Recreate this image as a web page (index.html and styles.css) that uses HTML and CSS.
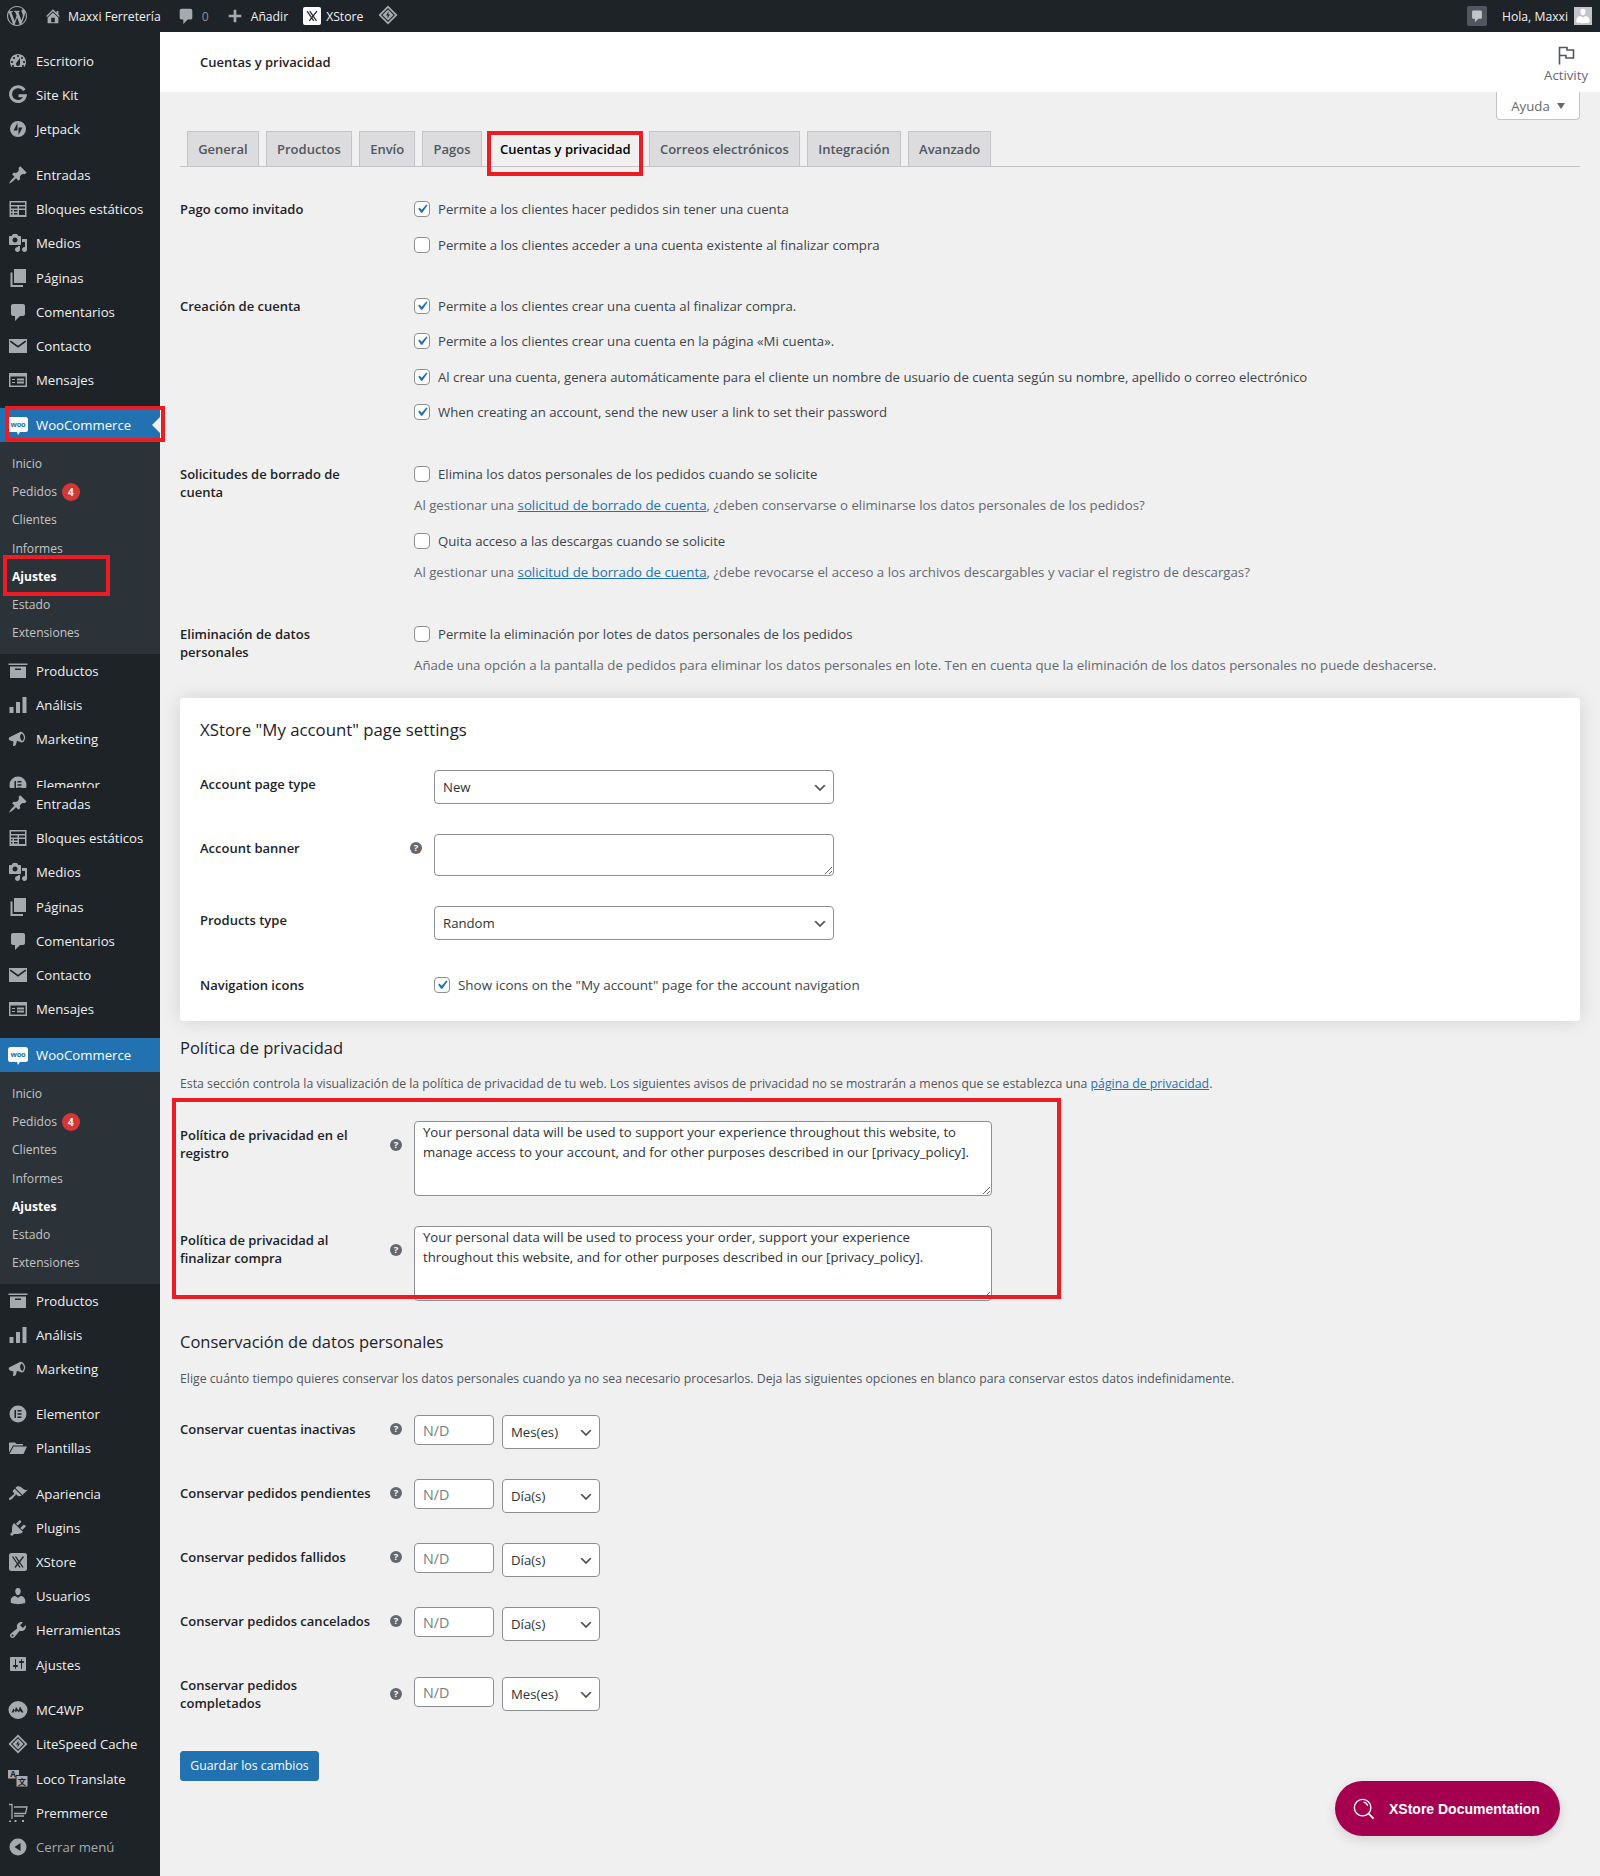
FILE: index.html
```html
<!DOCTYPE html>
<html lang="es">
<head>
<meta charset="utf-8">
<title>Cuentas y privacidad</title>
<link rel="stylesheet" href="styles.css">
</head>
<body>
<svg class="defs" width="0" height="0" aria-hidden="true">
<symbol id="i-wp" viewBox="0 0 20 20"><path d="M20 10c0-5.51-4.49-10-10-10C4.48 0 0 4.49 0 10c0 5.52 4.48 10 10 10 5.51 0 10-4.48 10-10zM7.78 15.37L4.37 6.22c.55-.02 1.17-.08 1.17-.08.5-.06.44-1.13-.06-1.11 0 0-1.45.11-2.37.11-.18 0-.37 0-.58-.01C4.12 2.69 6.87 1.11 10 1.11c2.33 0 4.45.87 6.05 2.34-.68-.11-1.65.39-1.65 1.58 0 .74.45 1.36.9 2.1.35.61.55 1.36.55 2.46 0 1.49-1.4 5-1.4 5l-3.03-8.37c.54-.02.82-.17.82-.17.5-.05.44-1.25-.06-1.22 0 0-1.44.12-2.38.12-.87 0-2.33-.12-2.33-.12-.5-.03-.56 1.2-.06 1.22l.92.08 1.26 3.41zM17.41 10c.24-.64.74-1.87.43-4.25.7 1.29 1.05 2.71 1.05 4.25 0 3.29-1.73 6.24-4.4 7.78.97-2.59 1.94-5.2 2.92-7.78zM6.1 18.09C3.12 16.65 1.11 13.53 1.11 10c0-1.3.23-2.48.72-3.59C3.25 10.3 4.67 14.2 6.1 18.09zm4.03-6.63l2.58 6.98c-.86.29-1.76.45-2.71.45-.79 0-1.57-.11-2.29-.33.81-2.38 1.62-4.74 2.42-7.1z"/></symbol>
<symbol id="i-home" viewBox="0 0 20 20"><path d="M16 8.5l1.53 1.53-1.06 1.06L10 4.62l-6.47 6.47-1.06-1.06L10 2.5l4 4v-2h2v4zm-6-2.46l6 5.99V18H4v-5.97zM12 17v-5H8v5h4z"/></symbol>
<symbol id="i-comment" viewBox="0 0 20 20"><path d="M5 2h10c1.1 0 2 .9 2 2v8c0 1.1-.9 2-2 2h-3l-5 5v-5H5c-1.1 0-2-.9-2-2V4c0-1.1.9-2 2-2z"/></symbol>
<symbol id="i-plus" viewBox="0 0 20 20"><path d="M17 8.500v3h-5.500V17h-3v-5.500H3v-3h5.500V3h3v5.500z"/></symbol>
<symbol id="i-dash" viewBox="0 0 20 20"><path fill-rule="evenodd" d="M3.76 16h12.48c1.1-1.37 1.76-3.11 1.76-5 0-4.42-3.58-8-8-8s-8 3.58-8 8c0 1.89.66 3.63 1.76 5zM10 4c.55 0 1 .45 1 1s-.45 1-1 1-1-.45-1-1 .45-1 1-1zM6 6c.55 0 1 .45 1 1s-.45 1-1 1-1-.45-1-1 .45-1 1-1zm8 0c.55 0 1 .45 1 1s-.45 1-1 1-1-.45-1-1 .45-1 1-1zm-5.37 5.55L12 7v6c0 1.1-.9 2-2 2s-2-.9-2-2c0-.57.24-1.08.63-1.45zM4 10c.55 0 1 .45 1 1s-.45 1-1 1-1-.45-1-1 .45-1 1-1zm12 0c.55 0 1 .45 1 1s-.45 1-1 1-1-.45-1-1 .45-1 1-1zM5 14c.55 0 1 .45 1 1s-.45 1-1 1-1-.45-1-1 .45-1 1-1zm10 0c.55 0 1 .45 1 1s-.45 1-1 1-1-.45-1-1 .45-1 1-1z"/></symbol>
<symbol id="i-g" viewBox="0 0 20 20"><path d="M16.300 5.300A7.400 7.400 0 1 0 17.200 10.800H10.500" fill="none" stroke="currentColor" stroke-width="3"/></symbol>
<symbol id="i-jet" viewBox="0 0 20 20"><path fill-rule="evenodd" d="M10 2a8 8 0 1 0 0 16 8 8 0 0 0 0-16zM9.500 4v7.500H5.500zM10.500 16V8.500H14.500z"/></symbol>
<symbol id="i-pin" viewBox="0 0 20 20"><path d="M10.440 3.020l1.820-1.820 6.360 6.350-1.830 1.820c-1.050-.68-2.480-.57-3.410.36l-.75.75c-.92.93-1.040 2.350-.35 3.410l-1.830 1.820-2.410-2.410-2.800 2.790c-.42.42-3.380 2.710-3.800 2.290s1.860-3.390 2.280-3.810l2.790-2.790L4.100 9.360l1.830-1.820c1.050.69 2.480.57 3.400-.36l.75-.75c.93-.92 1.050-2.350.36-3.410z"/></symbol>
<symbol id="i-blocks" viewBox="0 0 20 20"><path fill-rule="evenodd" d="M1.500 2h17v16h-17zM3 3.500v2.500h14V3.500zM3 7.500v2h6.500v-2zM11 7.500v2h6v-2zM3 11v1.500h1.500V11zM6 11v1.500h3.500V11zM11 11v5h6v-5zM3 14v1.500h1.500V14zM6 14v1.500h3.500V14z"/></symbol>
<symbol id="i-media" viewBox="0 0 20 20"><path d="M13 11V4c0-.55-.45-1-1-1h-1.670L9 1H5L3.670 3H2c-.55 0-1 .45-1 1v7c0 .55.45 1 1 1h10c.55 0 1-.45 1-1zM7 4.500c1.380 0 2.500 1.120 2.500 2.500S8.380 9.500 7 9.500 4.500 8.380 4.500 7 5.620 4.500 7 4.500zM14 6h5v10.500c0 1.380-1.120 2.500-2.500 2.500S14 17.880 14 16.500s1.120-2.500 2.500-2.500c.17 0 .34.02.5.05V9h-3V6zm-4 8.050V13h2v3.500c0 1.380-1.120 2.500-2.500 2.500S7 17.880 7 16.500 8.120 14 9.500 14c.17 0 .34.02.5.05z"/></symbol>
<symbol id="i-pages" viewBox="0 0 20 20"><path d="M6 1h12v14H6zM2.500 4.500h2V17H15v2H2.500z"/></symbol>
<symbol id="i-mail" viewBox="0 0 20 20"><path fill-rule="evenodd" d="M1 3h18v14H1zM2.800 4.500L1.700 5.800 10 11.800l8.300-6-1.100-1.300-7.200 5.200z"/></symbol>
<symbol id="i-forms" viewBox="0 0 20 20"><path fill-rule="evenodd" d="M1 3h18v14H1zM2.500 6.500v9h15v-9zM4 9h3v1H4zM9 8.500h7v2H9zM4 12h3v1H4zM9 11.500h7v2H9z"/></symbol>
<symbol id="i-box" viewBox="0 0 20 20"><path fill-rule="evenodd" d="M.5 2.500h19V4H.5zM2 5.500h16V17H2zM7 7.500v1.500h6V7.500z"/></symbol>
<symbol id="i-bars" viewBox="0 0 20 20"><path d="M1.500 12H5.500V18H1.500zM8 7H12V18H8zM14.500 2H18.500V18H14.500z"/></symbol>
<symbol id="i-mega" viewBox="0 0 20 20"><path fill-rule="evenodd" d="M1 8.500l11-5.500c1-.5 2.200 0 3 .8a7 7 0 0 1 1 8.500c-.8 1-2 1.500-3 1l-4-1.500-1 3.800c-.2.900-1 1.400-2 1.400H5L5.500 12.500 2 11.500C.8 11 .5 9 1 8.500zM13.500 4.500a4.700 4.700 0 0 0 1 7.500 4.700 4.700 0 0 0-1-7.500z"/></symbol>
<symbol id="i-elem" viewBox="0 0 20 20"><path fill-rule="evenodd" d="M10 1.500a8.500 8.500 0 1 0 0 17 8.500 8.500 0 0 0 0-17zM6.500 6h1.500v8H6.500zM9.500 6h4v1.500h-4zM9.500 9.250h4v1.500h-4zM9.500 12.500h4V14h-4z"/></symbol>
<symbol id="i-folder" viewBox="0 0 20 20"><path d="M1 4.500h6l1.500 1.500H15v1.500H5L1 14.500zM5.500 8.500H19l-3.500 7.500H1.500z"/></symbol>
<symbol id="i-brush" viewBox="0 0 20 20"><path d="M14.480 11.060L7.410 3.990l1.500-1.500c.5-.56 2.300-.47 3.510.32 1.210.8 1.430 1.280 2.910 2.100 1.180.64 2.450 1.260 4.450.85zm-.71.71L6.700 4.700 4.930 6.470c-.39.39-.39 1.020 0 1.410l1.060 1.060c.39.39.39 1.030 0 1.420-.6.6-1.430 1.110-2.210 1.690-.35.26-.7.53-1.010.84C1.430 13.230.4 14.870 1.200 15.670c.79.8 2.440-.23 3.770-1.560.31-.31.58-.66.84-1.010.58-.78 1.090-1.610 1.690-2.210.39-.39 1.020-.39 1.410 0l1.060 1.060c.39.39 1.020.39 1.410 0z"/></symbol>
<symbol id="i-plug" viewBox="0 0 20 20"><path d="M13.110 4.360L9.870 7.600 8 5.730l3.240-3.240c.35-.34 1.050-.2 1.560.32.52.51.66 1.210.31 1.550zm-8 1.770l.91-1.120 9.010 9.010-1.190.84c-.71.71-2.630 1.160-3.820 1.160H6.140L4.900 17.260c-.59.59-1.540.59-2.120 0-.59-.58-.59-1.530 0-2.120l1.240-1.240v-3.880c0-1.130.4-3.190 1.090-3.890zm7.260 3.970l3.240-3.240c.34-.35 1.040-.21 1.550.31.52.51.66 1.210.31 1.550l-3.240 3.250z"/></symbol>
<symbol id="i-x" viewBox="0 0 20 20"><rect x="1" y="1" width="18" height="18" rx="2.500" fill="currentColor"/><path d="M4.500 4.500l7.500 11M15.500 4.500L7 15.500M7.500 4.500l7.500 11" fill="none" stroke="#1d2327" stroke-width="1.300"/></symbol>
<symbol id="i-user" viewBox="0 0 20 20"><path d="M10 9.250c-2.270 0-2.730-3.440-2.730-3.440C7 4.020 7.820 2 9.970 2c2.160 0 2.980 2.020 2.710 3.810 0 0-.41 3.440-2.680 3.440zm0 2.570L12.720 10c2.390 0 4.520 2.330 4.520 4.530v2.490s-3.650 1.130-7.240 1.130c-3.650 0-7.240-1.130-7.240-1.130v-2.490c0-2.250 1.940-4.480 4.470-4.480z"/></symbol>
<symbol id="i-tool" viewBox="0 0 20 20"><path d="M16.680 9.770c-1.340 1.340-3.300 1.670-4.950.99l-5.410 6.520c-.99.99-2.590.99-3.580 0s-.99-2.590 0-3.570l6.520-5.420c-.68-1.650-.35-3.610.99-4.950 1.280-1.280 3.120-1.620 4.720-1.060l-2.890 2.890 2.820 2.820 2.860-2.870c.53 1.580.18 3.390-1.080 4.670zM3.810 16.210c.4.39 1.040.39 1.430 0 .4-.4.4-1.040 0-1.430-.39-.4-1.030-.4-1.430 0-.39.39-.39 1.030 0 1.430z"/></symbol>
<symbol id="i-set" viewBox="0 0 20 20"><path fill-rule="evenodd" d="M18 16V4c0-.55-.45-1-1-1H3c-.55 0-1 .45-1 1v12c0 .55.45 1 1 1h14c.55 0 1-.45 1-1zM8 11h1c.55 0 1 .45 1 1s-.45 1-1 1H8v1.500c0 .28-.22.5-.5.5s-.5-.22-.5-.5V13H6c-.55 0-1-.45-1-1s.45-1 1-1h1V5.500c0-.28.22-.5.5-.5s.5.22.5.5V11zm5-2h-1c-.55 0-1-.45-1-1s.45-1 1-1h1V5.500c0-.28.22-.5.5-.5s.5.22.5.5V7h1c.55 0 1 .45 1 1s-.45 1-1 1h-1v5.500c0 .28-.22.5-.5.5s-.5-.22-.5-.5V9z"/></symbol>
<symbol id="i-mc" viewBox="0 0 20 20"><path fill-rule="evenodd" d="M10 1a9.500 9 0 1 0 0 18 9.500 9 0 0 0 0-18zM3.500 12.500l2-4 1.500 2 1-3.500 2.500 3.500 1.500-4 3.500 6h-2l-1.500-2-1 2-2-2-1 2-1.500-2-1 2z"/></symbol>
<symbol id="i-ls" viewBox="0 0 20 20"><path fill-rule="evenodd" d="M10 .5L19.500 10 10 19.500.5 10zM10 3L3 10l7 7 7-7zM10 4.500L15.500 10 10 15.500 4.500 10zM10.500 6.500L8 10.500h1.700L9.500 13.500l2.500-4h-1.700z"/></symbol>
<symbol id="i-close" viewBox="0 0 20 20"><path fill-rule="evenodd" d="M10 1.500a8.500 8.500 0 1 0 0 17 8.500 8.500 0 0 0 0-17zM12.500 6v8L6.500 10z"/></symbol>
<symbol id="i-cart" viewBox="0 0 20 20"><path d="M1 1.500h3v14.500M6 4h13l-1.500 6.500H6M6 13h10" fill="none" stroke="currentColor" stroke-width="1.300"/><path d="M1 17.500h2v1.500H1zM6.500 17h2v2h-2zM14 17h2v2h-2z"/></symbol>
<symbol id="i-woo" viewBox="0 0 20 20"><path d="M2.500 2h15A2.500 2.500 0 0 1 20 4.500v10a2.500 2.500 0 0 1-2.500 2.500H12l-2 3-1-3H2.500A2.500 2.500 0 0 1 0 14.500v-10A2.500 2.500 0 0 1 2.500 2z" fill="#fff"/></symbol>
<symbol id="i-help" viewBox="0 0 12 12"><circle cx="6" cy="6" r="6" fill="#646970"/></symbol>
<symbol id="i-flag" viewBox="0 0 20 20"><path d="M3.500 19.500V2.500H11V5H17.500V13H10V10.500H3.500" fill="none" stroke="currentColor" stroke-width="1.600"/></symbol>
</svg>

<header class="adminbar">
  <div class="ab-left">
    <svg class="ab-ic ab-wp"><use href="#i-wp"/></svg>
    <svg class="ab-ic ab-home"><use href="#i-home"/></svg>
    <span class="ab-t">Maxxi Ferretería</span>
    <svg class="ab-ic ab-com"><use href="#i-comment"/></svg>
    <span class="ab-t ab-zero">0</span>
    <svg class="ab-ic ab-plus"><use href="#i-plus"/></svg>
    <span class="ab-t">Añadir</span>
    <span class="ab-x"><svg><use href="#i-x"/></svg></span>
    <span class="ab-t">XStore</span>
    <svg class="ab-ic ab-ls"><use href="#i-ls"/></svg>
  </div>
  <div class="ab-right">
    <span class="ab-note"><svg><use href="#i-comment"/></svg></span>
    <span class="ab-t">Hola, Maxxi</span>
    <span class="ab-avatar"><svg><use href="#i-user"/></svg></span>
  </div>
</header>

<div class="layout">
  <nav class="sidebar">
    <div class="menu-clip">
      <ul class="menu">
        <li class="mi"><svg><use href="#i-dash"/></svg>Escritorio</li>
        <li class="mi"><svg><use href="#i-g"/></svg>Site Kit</li>
        <li class="mi"><svg><use href="#i-jet"/></svg>Jetpack</li>
        <li class="mi sep"><svg><use href="#i-pin"/></svg>Entradas</li>
        <li class="mi"><svg><use href="#i-blocks"/></svg>Bloques estáticos</li>
        <li class="mi"><svg><use href="#i-media"/></svg>Medios</li>
        <li class="mi"><svg><use href="#i-pages"/></svg>Páginas</li>
        <li class="mi"><svg><use href="#i-comment"/></svg>Comentarios</li>
        <li class="mi"><svg><use href="#i-mail"/></svg>Contacto</li>
        <li class="mi"><svg><use href="#i-forms"/></svg>Mensajes</li>
        <li class="mi sep current"><svg viewBox="0 0 20 20"><use href="#i-woo"/><text x="10" y="11.500" class="woo-t">woo</text></svg>WooCommerce</li>
        <li class="submenu">
          <ul>
            <li>Inicio</li>
            <li>Pedidos <span class="badge">4</span></li>
            <li>Clientes</li>
            <li>Informes</li>
            <li class="on">Ajustes</li>
            <li>Estado</li>
            <li>Extensiones</li>
          </ul>
        </li>
        <li class="mi"><svg><use href="#i-box"/></svg>Productos</li>
        <li class="mi"><svg><use href="#i-bars"/></svg>Análisis</li>
        <li class="mi"><svg><use href="#i-mega"/></svg>Marketing</li>
        <li class="mi sep"><svg><use href="#i-elem"/></svg>Elementor</li>
      </ul>
    </div>
    <ul class="menu menu-second">
      <li class="mi"><svg><use href="#i-pin"/></svg>Entradas</li>
      <li class="mi"><svg><use href="#i-blocks"/></svg>Bloques estáticos</li>
      <li class="mi"><svg><use href="#i-media"/></svg>Medios</li>
      <li class="mi"><svg><use href="#i-pages"/></svg>Páginas</li>
      <li class="mi"><svg><use href="#i-comment"/></svg>Comentarios</li>
      <li class="mi"><svg><use href="#i-mail"/></svg>Contacto</li>
      <li class="mi"><svg><use href="#i-forms"/></svg>Mensajes</li>
      <li class="mi sep current plain"><svg viewBox="0 0 20 20"><use href="#i-woo"/><text x="10" y="11.500" class="woo-t">woo</text></svg>WooCommerce</li>
      <li class="submenu">
        <ul>
          <li>Inicio</li>
          <li>Pedidos <span class="badge">4</span></li>
          <li>Clientes</li>
          <li>Informes</li>
          <li class="on">Ajustes</li>
          <li>Estado</li>
          <li>Extensiones</li>
        </ul>
      </li>
      <li class="mi"><svg><use href="#i-box"/></svg>Productos</li>
      <li class="mi"><svg><use href="#i-bars"/></svg>Análisis</li>
      <li class="mi"><svg><use href="#i-mega"/></svg>Marketing</li>
      <li class="mi sep sep-tight"><svg><use href="#i-elem"/></svg>Elementor</li>
      <li class="mi"><svg><use href="#i-folder"/></svg>Plantillas</li>
      <li class="mi sep"><svg><use href="#i-brush"/></svg>Apariencia</li>
      <li class="mi"><svg><use href="#i-plug"/></svg>Plugins</li>
      <li class="mi"><svg><use href="#i-x"/></svg>XStore</li>
      <li class="mi"><svg><use href="#i-user"/></svg>Usuarios</li>
      <li class="mi"><svg><use href="#i-tool"/></svg>Herramientas</li>
      <li class="mi"><svg><use href="#i-set"/></svg>Ajustes</li>
      <li class="mi sep"><svg><use href="#i-mc"/></svg>MC4WP</li>
      <li class="mi"><svg><use href="#i-ls"/></svg>LiteSpeed Cache</li>
      <li class="mi"><svg viewBox="0 0 20 20"><path d="M0 2h11v8.500H0z"/><path d="M8 7.500h12V19H8z" stroke="#1d2327" stroke-width="1"/><text x="5" y="8.500" class="loco-a">A</text><text x="14" y="16.500" class="loco-z">文</text></svg>Loco Translate</li>
      <li class="mi"><svg><use href="#i-cart"/></svg>Premmerce</li>
      <li class="mi collapse"><svg><use href="#i-close"/></svg>Cerrar menú</li>
    </ul>
  </nav>

  <main class="main">
    <div class="pagehead">
      <h1>Cuentas y privacidad</h1>
      <div class="activity"><svg><use href="#i-flag"/></svg><span>Activity</span></div>
    </div>
    <div class="help-tab">Ayuda <i class="caret"></i></div>

    <div class="content">
      <div class="tabs">
        <a class="tab">General</a>
        <a class="tab">Productos</a>
        <a class="tab">Envío</a>
        <a class="tab">Pagos</a>
        <a class="tab active">Cuentas y privacidad</a>
        <a class="tab">Correos electrónicos</a>
        <a class="tab">Integración</a>
        <a class="tab">Avanzado</a>
      </div>

      <section class="general">
        <div class="row row-first">
          <div class="lbl">Pago como invitado</div>
          <div class="ctl">
            <label class="opt"><input type="checkbox" checked>Permite a los clientes hacer pedidos sin tener una cuenta</label>
            <label class="opt"><input type="checkbox">Permite a los clientes acceder a una cuenta existente al finalizar compra</label>
          </div>
        </div>
        <div class="row">
          <div class="lbl">Creación de cuenta</div>
          <div class="ctl">
            <label class="opt"><input type="checkbox" checked>Permite a los clientes crear una cuenta al finalizar compra.</label>
            <label class="opt"><input type="checkbox" checked>Permite a los clientes crear una cuenta en la página «Mi cuenta».</label>
            <label class="opt"><input type="checkbox" checked>Al crear una cuenta, genera automáticamente para el cliente un nombre de usuario de cuenta según su nombre, apellido o correo electrónico</label>
            <label class="opt"><input type="checkbox" checked>When creating an account, send the new user a link to set their password</label>
          </div>
        </div>
        <div class="row">
          <div class="lbl">Solicitudes de borrado de<br>cuenta</div>
          <div class="ctl">
            <label class="opt with-note"><input type="checkbox">Elimina los datos personales de los pedidos cuando se solicite</label>
            <p class="note spaced">Al gestionar una <a href="#">solicitud de borrado de cuenta</a>, ¿deben conservarse o eliminarse los datos personales de los pedidos?</p>
            <label class="opt with-note"><input type="checkbox">Quita acceso a las descargas cuando se solicite</label>
            <p class="note">Al gestionar una <a href="#">solicitud de borrado de cuenta</a>, ¿debe revocarse el acceso a los archivos descargables y vaciar el registro de descargas?</p>
          </div>
        </div>
        <div class="row last">
          <div class="lbl">Eliminación de datos<br>personales</div>
          <div class="ctl">
            <label class="opt with-note"><input type="checkbox">Permite la eliminación por lotes de datos personales de los pedidos</label>
            <p class="note">Añade una opción a la pantalla de pedidos para eliminar los datos personales en lote. Ten en cuenta que la eliminación de los datos personales no puede deshacerse.</p>
          </div>
        </div>
      </section>

      <section class="card">
        <h2 class="card-title">XStore "My account" page settings</h2>
        <div class="row r-card">
          <div class="lbl lbl-input">Account page type</div>
          <div class="ctl"><select class="sel-wide"><option>New</option></select></div>
        </div>
        <div class="row r-card">
          <div class="lbl lbl-input">Account banner</div>
          <svg class="tip tip-8" viewBox="0 0 12 12"><use href="#i-help"/><text x="6" y="9.300" class="help-t">?</text></svg>
          <div class="ctl"><textarea class="ta-banner"></textarea></div>
        </div>
        <div class="row r-card r-gap">
          <div class="lbl lbl-input">Products type</div>
          <div class="ctl"><select class="sel-wide"><option>Random</option></select></div>
        </div>
        <div class="row r-card r-end">
          <div class="lbl">Navigation icons</div>
          <div class="ctl"><label class="opt"><input type="checkbox" checked>Show icons on the "My account" page for the account navigation</label></div>
        </div>
      </section>

      <section class="privacy">
        <h2 class="sec-title">Política de privacidad</h2>
        <p class="sec-desc">Esta sección controla la visualización de la política de privacidad de tu web. Los siguientes avisos de privacidad no se mostrarán a menos que se establezca una <a href="#">página de privacidad</a>.</p>
        <div class="row r-ta">
          <div class="lbl lbl-ta">Política de privacidad en el<br>registro</div>
          <svg class="tip tip-18" viewBox="0 0 12 12"><use href="#i-help"/><text x="6" y="9.300" class="help-t">?</text></svg>
          <div class="ctl"><textarea class="ta-policy">Your personal data will be used to support your experience throughout this website, to manage access to your account, and for other purposes described in our [privacy_policy].</textarea></div>
        </div>
        <div class="row r-ta">
          <div class="lbl lbl-ta">Política de privacidad al<br>finalizar compra</div>
          <svg class="tip tip-18" viewBox="0 0 12 12"><use href="#i-help"/><text x="6" y="9.300" class="help-t">?</text></svg>
          <div class="ctl"><textarea class="ta-policy">Your personal data will be used to process your order, support your experience throughout this website, and for other purposes described in our [privacy_policy].</textarea></div>
        </div>
      </section>

      <section class="retention">
        <h2 class="sec-title ret-title">Conservación de datos personales</h2>
        <p class="sec-desc ret-desc">Elige cuánto tiempo quieres conservar los datos personales cuando ya no sea necesario procesarlos. Deja las siguientes opciones en blanco para conservar estos datos indefinidamente.</p>
        <div class="row r-ret">
          <div class="lbl lbl-input">Conservar cuentas inactivas</div>
          <svg class="tip tip-8" viewBox="0 0 12 12"><use href="#i-help"/><text x="6" y="9.300" class="help-t">?</text></svg>
          <div class="ctl ret-ctl"><input class="num" type="text" placeholder="N/D"><select class="unit"><option>Mes(es)</option></select></div>
        </div>
        <div class="row r-ret">
          <div class="lbl lbl-input">Conservar pedidos pendientes</div>
          <svg class="tip tip-8" viewBox="0 0 12 12"><use href="#i-help"/><text x="6" y="9.300" class="help-t">?</text></svg>
          <div class="ctl ret-ctl"><input class="num" type="text" placeholder="N/D"><select class="unit"><option>Día(s)</option></select></div>
        </div>
        <div class="row r-ret">
          <div class="lbl lbl-input">Conservar pedidos fallidos</div>
          <svg class="tip tip-8" viewBox="0 0 12 12"><use href="#i-help"/><text x="6" y="9.300" class="help-t">?</text></svg>
          <div class="ctl ret-ctl"><input class="num" type="text" placeholder="N/D"><select class="unit"><option>Día(s)</option></select></div>
        </div>
        <div class="row r-ret">
          <div class="lbl lbl-input">Conservar pedidos cancelados</div>
          <svg class="tip tip-8" viewBox="0 0 12 12"><use href="#i-help"/><text x="6" y="9.300" class="help-t">?</text></svg>
          <div class="ctl ret-ctl"><input class="num" type="text" placeholder="N/D"><select class="unit"><option>Día(s)</option></select></div>
        </div>
        <div class="row r-ret r-ret-last">
          <div class="lbl lbl-double">Conservar pedidos<br>completados</div>
          <svg class="tip tip-11" viewBox="0 0 12 12"><use href="#i-help"/><text x="6" y="9.300" class="help-t">?</text></svg>
          <div class="ctl ret-ctl"><input class="num" type="text" placeholder="N/D"><select class="unit"><option>Mes(es)</option></select></div>
        </div>
      </section>

      <button class="save" type="button">Guardar los cambios</button>
    </div>
  </main>
</div>

<a class="doc-btn">
  <svg viewBox="0 0 24 24"><circle cx="10.500" cy="10.500" r="9" fill="none" stroke="#fff" stroke-width="1.500"/><path d="M17 17l5.500 5.500" stroke="#fff" stroke-width="1.800"/><path d="M11.500 4.500a5.500 5.500 0 0 1 4.500 4" fill="none" stroke="#fff" stroke-width="1.300"/></svg>
  <span>XStore Documentation</span>
</a>

<div class="mark mark-tab"></div>
<div class="mark mark-woo"></div>
<div class="mark mark-set"></div>
<div class="mark mark-policy"></div>
</body>
</html>
```
FILE: styles.css
```css
* { box-sizing: border-box; }
html, body { margin: 0; padding: 0; }
body {
  width: 1600px;
  height: 1876px;
  position: relative;
  overflow: hidden;
  background: #f0f0f1;
  color: #3c434a;
  font-family: "Open Sans", "Noto Sans", sans-serif;
  font-size: 13.200px;
  line-height: 20px;
}
.defs { position: absolute; }
ul { list-style: none; margin: 0; padding: 0; }
h1, h2, p { margin: 0; }
a { color: #2271b1; }
.loco-a { font: 700 8px "Open Sans", sans-serif; fill: #1d2327; text-anchor: middle; }
.loco-z { font: 700 8px "Noto Sans CJK SC", sans-serif; fill: #1d2327; text-anchor: middle; }
.woo-t { font: 700 7.500px "Open Sans", sans-serif; fill: #2271b1; text-anchor: middle; letter-spacing: -0.2px; }
.help-t { font: 700 9.500px "Open Sans", sans-serif; fill: #fff; text-anchor: middle; }

/* admin bar */
.adminbar {
  height: 32px;
  background: #1d2327;
  color: #f0f0f1;
  display: flex;
  justify-content: space-between;
  align-items: center;
  padding: 0 8px 0 7px;
}
.ab-left, .ab-right { display: flex; align-items: center; }
.ab-ic { width: 18px; height: 18px; fill: #a7aaad; flex: none; }
.ab-wp { width: 20px; height: 20px; margin-right: 17px; }
.ab-home { margin-right: 6px; }
.ab-com { margin-left: 16px; margin-right: 7px; }
.ab-zero { color: #8c8f94; }
.ab-plus { margin-left: 17px; margin-right: 7px; }
.ab-x { width: 18px; height: 18px; margin-left: 15px; margin-right: 5px; background: #fff; border-radius: 2px; }
.ab-x svg { width: 18px; height: 18px; color: #fff; display: block; }
.ab-ls { width: 20px; height: 20px; margin-left: 15px; margin-top: -2px; }
.ab-t { font-size: 12.200px; white-space: nowrap; margin-top: 1px; }
.ab-note { width: 20px; height: 20px; margin-right: 15px; background: #50575e; border-radius: 2px; display: flex; align-items: center; justify-content: center; fill: #c3c4c7; }
.ab-note svg { width: 14px; height: 14px; }
.ab-avatar { width: 18px; height: 18px; margin-left: 6px; background: #c3c4c7; display: block; fill: #fff; }
.ab-avatar svg { width: 18px; height: 18px; display: block; }

/* layout */
.layout { display: flex; height: 1844px; }
.sidebar {
  width: 160px;
  flex: none;
  background: #1d2327;
  color: #f0f0f1;
  padding-top: 12px;
}
.menu-clip { height: 744px; overflow: hidden; }
.menu-second { margin-top: -1px; }
.mi {
  height: 34.200px;
  display: flex;
  align-items: center;
  position: relative;
  padding-left: 36px;
  white-space: nowrap;
}
.mi svg {
  position: absolute;
  left: 8px;
  top: 7px;
  width: 20px;
  height: 20px;
  fill: #a7aaad;
  color: #a7aaad;
}
.sep { margin-top: 11.400px; }
.sep-tight { margin-top: 10.400px; }
.current { background: #2271b1; color: #fff; height: 34px; margin-top: 10.600px; }
.current::after {
  content: "";
  position: absolute;
  right: 0;
  top: 9px;
  border: 8px solid transparent;
  border-right-color: #f0f0f1;
  border-left-width: 0;
}
.current.plain { margin-top: 11.600px; }
.current.plain::after { display: none; }
.collapse { color: #a7aaad; }
.submenu { background: #2c3338; color: #c3c4c7; padding: 8px 0 6.600px; }
.submenu li { height: 28.200px; display: flex; align-items: center; padding-left: 12px; font-size: 12.100px; }
.submenu .on { color: #fff; font-weight: 700; }
.badge {
  width: 18px;
  height: 18px;
  margin-left: 5px;
  border-radius: 50%;
  background: #d63638;
  color: #fff;
  font-size: 10px;
  font-weight: 700;
  display: flex;
  align-items: center;
  justify-content: center;
}

/* main */
.main { flex: 1; position: relative; min-width: 0; }
.pagehead {
  height: 60px;
  background: #fff;
  padding: 0 12px 0 40px;
  display: flex;
  align-items: center;
  justify-content: space-between;
}
.pagehead h1 { font-size: 13px; font-weight: 600; color: #1d2327; line-height: 20px; }
.activity { display: flex; flex-direction: column; align-items: center; color: #646970; margin-top: 4px; }
.activity svg { width: 20px; height: 20px; color: #50575e; fill: none; margin-bottom: 2px; }
.activity span { line-height: 16px; }
.help-tab {
  position: absolute;
  right: 20px;
  top: 60px;
  width: 84px;
  height: 28px;
  background: #fff;
  border: 1px solid #c3c4c7;
  border-top: 0;
  border-radius: 0 0 4px 4px;
  display: flex;
  align-items: center;
  justify-content: center;
  gap: 7px;
  color: #646970;
}
.caret { border: 4.500px solid transparent; border-top: 6px solid #646970; border-bottom: 0; margin-top: 1px; }
.content { padding: 39px 20px 0; }

.tabs { display: flex; gap: 7px; padding-left: 7px; border-bottom: 1px solid #c3c4c7; height: 36px; margin-bottom: 32px; }
.tab {
  height: 35px;
  padding: 0 10.200px;
  background: #dcdcde;
  border: 1px solid #c3c4c7;
  border-bottom: 0;
  color: #50575e;
  font-size: 13px;
  font-weight: 600;
  display: flex;
  align-items: center;
  white-space: nowrap;
}
.tab.active { background: #f0f0f1; color: #000; }

.row { display: grid; grid-template-columns: 210px 24px 1fr; margin-bottom: 42px; }
.row.row-first { margin-bottom: 41px; }
.row.last { margin-bottom: 23px; }
.lbl { grid-column: 1; color: #1d2327; font-size: 13px; font-weight: 600; line-height: 18px; padding-top: 1px; }
.lbl-input { padding-top: 5px; }
.lbl-ta { padding-top: 5px; }
.ctl { grid-column: 3; grid-row: 1; min-width: 0; }
.opt { display: flex; align-items: center; height: 20px; margin-bottom: 15.500px; white-space: nowrap; }
.opt:last-child { margin-bottom: 0; }
.opt.with-note { margin-bottom: 11px; }
.note { color: #646970; font-size: 13.250px; white-space: nowrap; }
.note.spaced { margin-bottom: 16px; }
.r-end .opt { font-size: 13.450px; }

input[type="checkbox"] {
  appearance: none;
  width: 16px;
  height: 16px;
  margin: 0 8px 0 0;
  flex: none;
  background: #fff center / 18px 18px no-repeat;
  border: 1px solid #8c8f94;
  border-radius: 4px;
}
input[type="checkbox"]:checked {
  background-image: url("data:image/svg+xml,%3Csvg xmlns='http://www.w3.org/2000/svg' viewBox='0 0 20 20'%3E%3Cpath d='M14.830 4.890l1.340.94-5.810 8.380H9.020L5.780 9.670l1.340-1.250 2.570 2.400z' fill='%232271b1'/%3E%3C/svg%3E");
}
select, textarea, .num {
  display: block;
  font: inherit;
  color: #2c3338;
  background-color: #fff;
  border: 1px solid #8c8f94;
  border-radius: 4px;
  margin: 0;
  outline: 0;
}
select {
  appearance: none;
  height: 34px;
  padding: 0 24px 0 8px;
  background: #fff url("data:image/svg+xml,%3Csvg xmlns='http://www.w3.org/2000/svg' width='20' height='20'%3E%3Cpath d='M5 6l5 5 5-5 2 1-7 7-7-7z' fill='%23555'/%3E%3C/svg%3E") no-repeat right 5px top 55% / 16px 16px;
}
.sel-wide { width: 400px; }
textarea { padding: 0 8px; }
.ta-banner { width: 400px; height: 42px; }
.ta-policy { width: 578px; height: 75px; }

/* card */
.card {
  height: 323px;
  padding: 21px 20px 26px;
  background: #fff;
  border-radius: 3px;
  box-shadow: 0 0 20px rgba(0, 0, 0, 0.12);
  margin-bottom: 16px;
}
.card-title { font-size: 16.800px; font-weight: 400; line-height: 22px; color: #1d2327; margin-bottom: 29px; }
.card .row { margin-bottom: 30px; }
.card .row.r-gap { margin-bottom: 35px; }
.card .row.r-end { margin-bottom: 0; }
.card .lbl { padding-top: 5px; }
.card .row.r-end .lbl { padding-top: 1px; }

.sec-title { font-size: 16.500px; font-weight: 400; line-height: 22px; color: #1d2327; margin-bottom: 15px; }
.sec-desc { color: #50575e; font-size: 12.280px; margin-bottom: 27px; }
.ret-title { margin-bottom: 16px; }
.ret-desc { margin-bottom: 26px; }
.tip { grid-column: 2; grid-row: 1; width: 12px; height: 12px; }
.tip-8 { margin-top: 8px; }
.tip-11 { margin-top: 11px; }
.tip-18 { margin-top: 18px; }
.r-ta { margin-bottom: 30px; }
.r-ret { margin-bottom: 30px; }
.r-ret-last { margin-top: 36px; margin-bottom: 39px; }
.lbl-double { padding-top: 0; margin-top: -1px; }
.ret-ctl { display: flex; align-items: flex-start; gap: 8px; }
.num { width: 80px; height: 30px; padding: 0 8px; font-size: 14.300px; }
.num::placeholder { color: #787c82; opacity: 1; }
.unit { width: 98px; }

.save {
  display: block;
  width: 139px;
  height: 30px;
  padding: 0;
  background: #2271b1;
  color: #fff;
  border: 1px solid #2271b1;
  border-radius: 3px;
  font: inherit;
  font-size: 12.300px;
}

.doc-btn {
  position: absolute;
  left: 1335px;
  top: 1781px;
  width: 225px;
  height: 55px;
  border-radius: 28px;
  background: #a4004f;
  box-shadow: 0 4px 12px rgba(0, 0, 0, 0.12);
  color: #fff;
  display: flex;
  align-items: center;
  padding-left: 18px;
  gap: 14px;
  font: 700 14px/20px "Liberation Sans", Arial, sans-serif;
}
.doc-btn svg { width: 22px; height: 24px; flex: none; }

/* annotation boxes drawn over the screenshot */
.mark { position: absolute; border: 4px solid #ed1c24; pointer-events: none; }
.mark-tab { left: 487px; top: 131px; width: 156px; height: 45px; }
.mark-woo { left: 5px; top: 406px; width: 160px; height: 36px; }
.mark-set { left: 3px; top: 555px; width: 107px; height: 41px; }
.mark-policy { left: 172px; top: 1098px; width: 889px; height: 201px; }
```
